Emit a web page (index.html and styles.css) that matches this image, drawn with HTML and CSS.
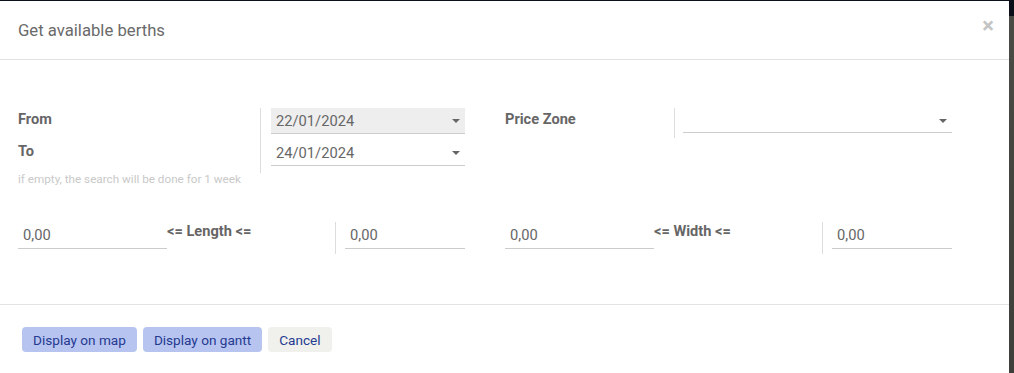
FILE: index.html
```html
<!DOCTYPE html>
<html lang="en">
<head>
  <meta charset="UTF-8" />
  <title>Get available berths</title>
  <link rel="stylesheet" href="styles.css">
</head>
<body>

<div class="modal">
  <div class="modal-header">
    <h4 class="modal-title">Get available berths</h4>
    <span class="close">&times;</span>
  </div>

  <div class="modal-body">
    <div class="row row-dates">
      <div class="half">
        <div class="labels">
          <div class="label">From</div>
          <div class="label label-to">To</div>
          <div class="hint">if empty, the search will be done for 1 week</div>
        </div>
        <div class="cell cell-dates">
          <div class="field field-date readonly">22/01/2024<span class="caret"></span></div>
          <div class="field field-date">24/01/2024<span class="caret"></span></div>
        </div>
      </div>
      <div class="half">
        <div class="labels labels-zone">
          <div class="label">Price Zone</div>
        </div>
        <div class="cell cell-zone">
          <div class="field field-zone"><span class="caret"></span></div>
        </div>
      </div>
    </div>

    <div class="row row-sizes">
      <div class="half">
        <div class="field field-num">0,00</div>
        <div class="label range">&lt;= Length &lt;=</div>
        <div class="cell cell-num">
          <div class="field field-num-small">0,00</div>
        </div>
      </div>
      <div class="half">
        <div class="field field-num">0,00</div>
        <div class="label range">&lt;= Width &lt;=</div>
        <div class="cell cell-num">
          <div class="field field-num-small">0,00</div>
        </div>
      </div>
    </div>
  </div>

  <div class="modal-footer">
    <button class="btn btn-primary">Display on map</button>
    <button class="btn btn-primary">Display on gantt</button>
    <button class="btn btn-secondary">Cancel</button>
  </div>
</div>

</body>
</html>
```

FILE: styles.css
```css
html, body {
  margin: 0;
  height: 100%;
}

body {
  background: linear-gradient(#0b0f19 0, #0b0f19 16px, #4b4b45 16px, #3e3e3a 100%);
  padding-top: 1px;
  box-sizing: border-box;
  font-family: Roboto, "Liberation Sans", sans-serif;
  color: #666;
}

.modal {
  width: 1009px;
  height: 372px;
  background: #fff;
}

.modal-header {
  display: flex;
  align-items: center;
  justify-content: space-between;
  height: 58px;
  padding: 0 15px 0 18px;
  border-bottom: 1px solid #e2e2e2;
}

.modal-title {
  margin: 0;
  font-size: 16.7px;
  font-weight: normal;
  color: #6a6a6a;
}

.close {
  font-size: 22px;
  font-weight: bold;
  color: #c4c4c4;
  line-height: 1;
  margin-top: -8px;
}

.modal-body {
  padding: 48px 18px 0;
  height: 196px;
  border-bottom: 1px solid #e2e2e2;
}

.row {
  display: flex;
  gap: 40px;
}

.half {
  display: flex;
  width: 447px;
}

.labels {
  width: 242px;
}

.labels-zone {
  width: 169px;
}

.label {
  font-size: 14.6px;
  font-weight: bold;
  color: #666;
  line-height: 18px;
  padding-top: 2px;
}

.label-to {
  padding-top: 14px;
}

.hint {
  margin-top: 12px;
  font-size: 11.7px;
  color: #c9c9c9;
}

.cell {
  border-left: 1px solid #ddd;
  padding-left: 10px;
}

.cell-dates {
  width: 194px;
  height: 65px;
}

.cell-zone {
  width: 269px;
  height: 30px;
  padding-left: 8px;
}

.field {
  position: relative;
  box-sizing: border-box;
  height: 26px;
  line-height: 26px;
  font-size: 14.7px;
  color: #666;
  padding-left: 5px;
  border-bottom: 1px solid #ccc;
}

.field-date + .field-date {
  margin-top: 6px;
}

.readonly {
  background: #eee;
}

.field-zone {
  height: 25px;
}

.caret {
  position: absolute;
  right: 5px;
  top: 11px;
  border-left: 4px solid transparent;
  border-right: 4px solid transparent;
  border-top: 4px solid #666;
}

.row-sizes {
  margin-top: 36px;
}

.field-num {
  width: 149px;
  height: 27px;
  line-height: 27px;
}

.range {
  width: 168px;
  padding-top: 0;
  line-height: 18px;
}

.cell-num {
  height: 32px;
  padding-left: 9px;
}

.field-num-small {
  width: 120px;
  height: 27px;
  line-height: 27px;
}

.modal-footer {
  display: flex;
  gap: 6px;
  padding: 22px 22px 0;
}

.btn {
  height: 25px;
  padding: 0 11px;
  border: none;
  border-radius: 4px;
  font-family: Roboto, "Liberation Sans", sans-serif;
  font-size: 13.6px;
  color: #253a91;
}

.btn-primary {
  background: #b8c4f0;
}

.btn-secondary {
  background: #f0f1ec;
}
```
